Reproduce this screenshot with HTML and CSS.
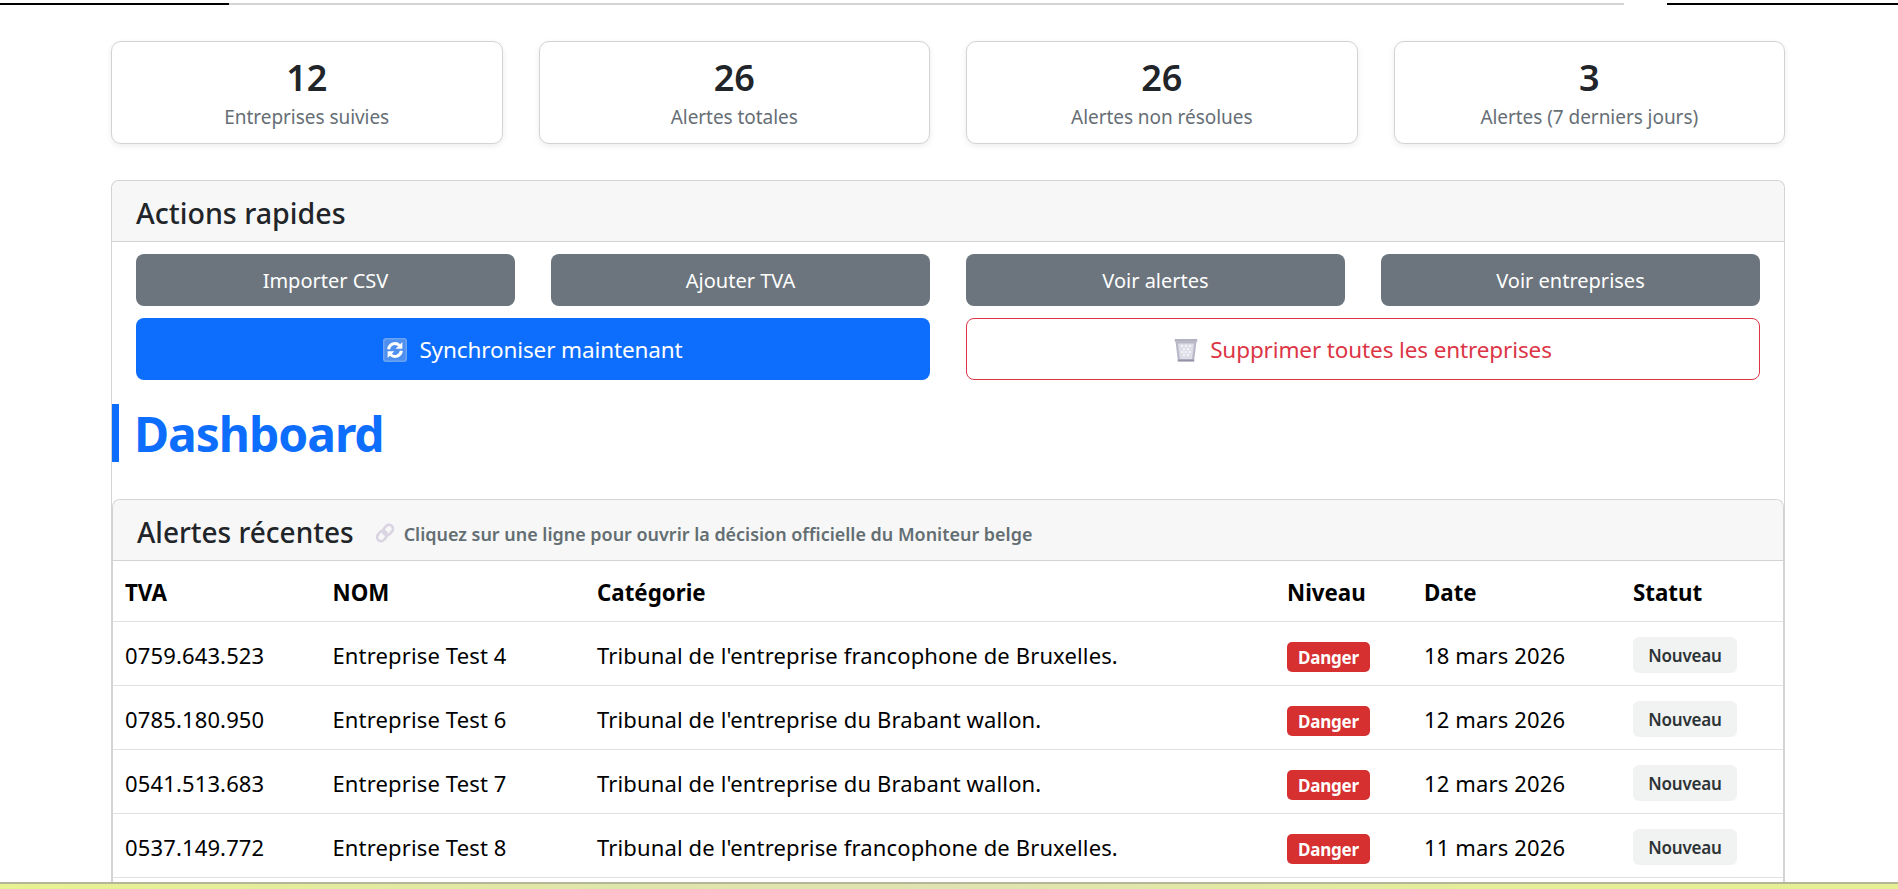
FILE: index.html
```html
<!DOCTYPE html>
<html lang="fr">
<head>
<meta charset="utf-8">
<title>Dashboard</title>
<link rel="stylesheet" href="styles.css">
</head>
<body>
<div class="topline"><span class="tl-black tl-left"></span><span class="tl-gray"></span><span class="tl-gap"></span><span class="tl-black tl-right"></span></div>
<main class="container">
  <section class="stats">
    <div class="stat"><div class="stat-num">12</div><div class="stat-label">Entreprises suivies</div></div>
    <div class="stat"><div class="stat-num">26</div><div class="stat-label">Alertes totales</div></div>
    <div class="stat"><div class="stat-num">26</div><div class="stat-label">Alertes non résolues</div></div>
    <div class="stat"><div class="stat-num">3</div><div class="stat-label">Alertes (7 derniers jours)</div></div>
  </section>
  <section class="outer">
    <div class="card-head outer-head"><h2 class="head-title title-actions">Actions rapides</h2></div>
    <div class="actions">
      <div class="row-4">
        <a class="btn btn-gray">Importer CSV</a>
        <a class="btn btn-gray">Ajouter TVA</a>
        <a class="btn btn-gray">Voir alertes</a>
        <a class="btn btn-gray">Voir entreprises</a>
      </div>
      <div class="row-2">
        <a class="btn btn-big btn-blue"><svg class="emoji" viewBox="0 0 24 24"><rect x="0" y="0" width="24" height="24" rx="3" fill="#6aa3f2"/><rect x="1.5" y="1.5" width="21" height="21" rx="2" fill="#4f8ff0"/><path d="M5.6 11.2a6.4 6.4 0 0 1 10.9-3.7" fill="none" stroke="#fff" stroke-width="3"/><path d="M19.4 4v6.8h-6.8z" fill="#fff"/><path d="M18.4 12.8a6.4 6.4 0 0 1-10.9 3.7" fill="none" stroke="#fff" stroke-width="3"/><path d="M4.6 20v-6.8h6.8z" fill="#fff"/></svg>Synchroniser maintenant</a>
        <a class="btn btn-big btn-outline"><svg class="emoji" viewBox="0 0 24 24"><path d="M1.5 3.5h21l-2.4 19.5H3.9z" fill="#b9b8c8"/><path d="M4 5.5h16l-1.9 15.5H5.9z" fill="#dedee8"/><g fill="#fbfbfd"><circle cx="8" cy="8" r="1.1"/><circle cx="12" cy="8" r="1.1"/><circle cx="16" cy="8" r="1.1"/><circle cx="10" cy="11" r="1.1"/><circle cx="14" cy="11" r="1.1"/><circle cx="8.4" cy="14" r="1.1"/><circle cx="12" cy="14" r="1.1"/><circle cx="15.6" cy="14" r="1.1"/><circle cx="10" cy="17" r="1.1"/><circle cx="14" cy="17" r="1.1"/></g><path d="M.8 1h22.4v2.8H.8z" fill="#b3b2c2"/><path d="M3.8 21.6h16.4V23.6H3.8z" fill="#9493a8"/></svg>Supprimer toutes les entreprises</a>
      </div>
    </div>
    <h1 class="page-title">Dashboard</h1>
    <section class="table-card">
      <div class="card-head table-head">
        <h2 class="head-title title-alerts">Alertes récentes</h2>
        <svg class="link-icon" viewBox="0 0 20 20"><g fill="none" stroke="#d9d3e2" stroke-width="2.6"><rect x="9" y="1.5" width="8" height="11" rx="4" transform="rotate(40 13 7)"/><rect x="3" y="7.5" width="8" height="11" rx="4" transform="rotate(40 7 13)"/></g></svg>
        <span class="hint">Cliquez sur une ligne pour ouvrir la décision officielle du Moniteur belge</span>
      </div>
      <table class="alerts">
        <colgroup><col class="c1"><col class="c2"><col class="c3"><col class="c4"><col class="c5"><col class="c6"></colgroup>
        <thead><tr><th>TVA</th><th>NOM</th><th>Catégorie</th><th>Niveau</th><th>Date</th><th>Statut</th></tr></thead>
        <tbody>
          <tr><td>0759.643.523</td><td>Entreprise Test 4</td><td>Tribunal de l'entreprise francophone de Bruxelles.</td><td><span class="badge-danger">Danger</span></td><td>18 mars 2026</td><td><span class="badge-new">Nouveau</span></td></tr>
          <tr><td>0785.180.950</td><td>Entreprise Test 6</td><td>Tribunal de l'entreprise du Brabant wallon.</td><td><span class="badge-danger">Danger</span></td><td>12 mars 2026</td><td><span class="badge-new">Nouveau</span></td></tr>
          <tr><td>0541.513.683</td><td>Entreprise Test 7</td><td>Tribunal de l'entreprise du Brabant wallon.</td><td><span class="badge-danger">Danger</span></td><td>12 mars 2026</td><td><span class="badge-new">Nouveau</span></td></tr>
          <tr><td>0537.149.772</td><td>Entreprise Test 8</td><td>Tribunal de l'entreprise francophone de Bruxelles.</td><td><span class="badge-danger">Danger</span></td><td>11 mars 2026</td><td><span class="badge-new">Nouveau</span></td></tr>
        </tbody>
      </table>
    </section>
  </section>
</main>
<div class="bottom-strip"></div>
</body>
</html>
```
FILE: styles.css
```css
* { box-sizing: border-box; }
html, body { margin: 0; height: 889px; overflow: hidden; background: #fff; }
body { font-family: "Noto Sans", "Open Sans", sans-serif; color: #212529; font-size: 20px; }

.topline { display: flex; height: 5px; padding-top: 3px; }
.tl-black { height: 2px; background: #000; display: block; }
.tl-left { width: 229px; }
.tl-gray { flex: 1; height: 2px; background: #d4d4d4; display: block; }
.tl-gap { width: 43px; display: block; }
.tl-right { width: 231px; }

.container { width: 1674px; margin-left: 111px; padding-top: 36px; }

.stats { display: grid; grid-template-columns: repeat(4, 1fr); gap: 36px; }
.stat { height: 103px; border: 1px solid #d3d3d3; border-radius: 10px; box-shadow: 0 2px 6px rgba(0,0,0,.08); text-align: center; padding-top: 13px; background: #fff; }
.stat-num { font-size: 36px; font-weight: 600; line-height: 46px; }
.stat-label { font-size: 19px; line-height: 32px; color: #666e75; letter-spacing: -0.05px; }

.outer { margin-top: 36px; height: 730px; border: 1px solid #d3d3d3; border-bottom: 0; border-radius: 8px 8px 0 0; }
.card-head { background: #f7f7f7; border-bottom: 1px solid #d3d3d3; display: flex; align-items: center; height: 61px; padding-left: 24px; border-radius: 8px 8px 0 0; }
.head-title { margin: 0; padding-top: 4px; font-weight: 500; line-height: 36px; }
.title-actions { font-size: 28.6px; }
.title-alerts { font-size: 28px; padding-top: 3px; }

.actions { padding: 12px 24px 0 24px; }
.row-4 { display: grid; grid-template-columns: repeat(4, 1fr); gap: 36px; }
.row-2 { display: grid; grid-template-columns: repeat(2, 1fr); gap: 36px; margin-top: 12px; }
.btn { display: flex; align-items: center; justify-content: center; height: 52px; padding-top: 1px; border-radius: 8px; font-size: 20px; }
.btn-gray { background: #6c757d; color: #fff; }
.btn-big { height: 62px; font-size: 22.5px; letter-spacing: -0.12px; }
.btn-blue { background: #0d6efd; color: #fff; }
.btn-outline { border: 1px solid #dc3545; color: #dc3545; background: #fff; }
.emoji { width: 24px; height: 24px; margin-right: 12px; flex: none; }

.page-title { margin: 24px 0 0 0; height: 58px; border-left: 7px solid #0d6efd; padding-left: 15px; color: #0d6efd; font-size: 48px; font-weight: 700; line-height: 60px; letter-spacing: -1.05px; }

.table-card { margin: 37px 0 0 0; height: 400px; border: 1px solid #d3d3d3; border-bottom: 0; border-radius: 8px 8px 0 0; }
.table-head { height: 61px; padding-left: 24px; }
.link-icon { width: 20px; height: 20px; margin-left: 21px; flex: none; margin-top: 6px; }
.hint { font-size: 17.95px; font-weight: 600; color: #636e72; margin-left: 9px; margin-top: 7px; }

.alerts { width: 100%; border-collapse: collapse; table-layout: fixed; color: #000; }
.c1 { width: 207.5px; } .c2 { width: 264.5px; } .c3 { width: 690px; } .c4 { width: 137px; } .c5 { width: 209px; }
.alerts th { text-align: left; font-weight: 700; font-size: 22.3px; height: 60px; padding: 4px 12px 0; border-bottom: 1px solid #e0e0e0; }
.alerts td { height: 64px; padding: 4px 12px 0; font-size: 22px; border-bottom: 1px solid #e0e0e0; letter-spacing: 0.14px; white-space: nowrap; }
.badge-danger { display: inline-flex; align-items: center; justify-content: center; width: 83px; height: 30px; margin-top: 2px; background: #d63031; color: #fff; border-radius: 5px; font-size: 17px; font-weight: 700; letter-spacing: -0.2px; vertical-align: middle; }
.badge-new { display: inline-flex; align-items: center; justify-content: center; width: 104px; height: 36px; background: #f1f2f2; color: #2d3436; border-radius: 6px; font-size: 17px; font-weight: 600; letter-spacing: -0.2px; vertical-align: middle; }

.bottom-strip { position: fixed; left: 0; right: 0; top: 882px; height: 7px; background: linear-gradient(90deg, #e9f291 0%, #dfe6a8 30%, #dfe3b0 50%, #e5ee98 80%, #e6ef94 100%); border-top: 2px solid #b5b59a; }
```
